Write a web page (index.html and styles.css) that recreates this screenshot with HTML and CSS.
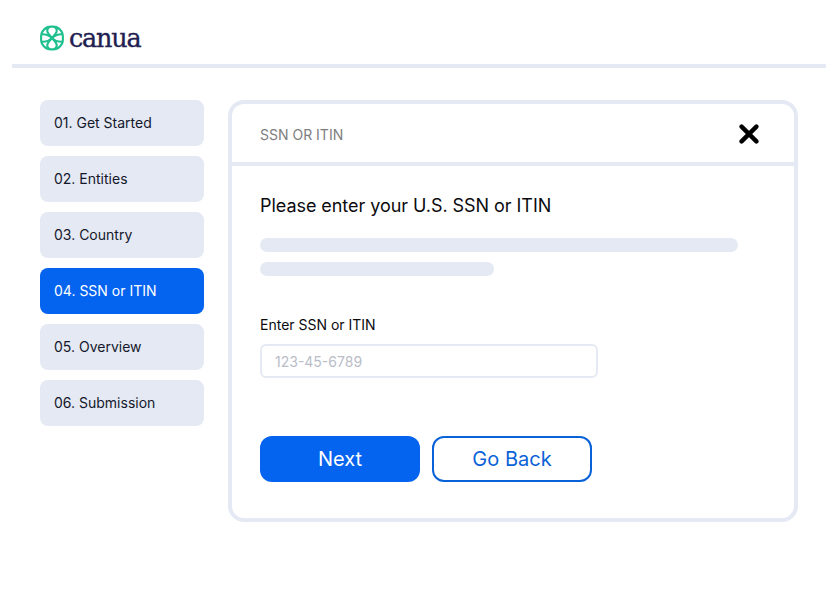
FILE: index.html
```html
<!DOCTYPE html>
<html lang="en">
<head>
<meta charset="utf-8">
<title>Canua</title>
<link rel="stylesheet" href="styles.css">
</head>
<body>
<header class="topbar">
  <svg class="logo-mark" viewBox="0 0 24 26" fill="none" stroke="#1fc08e" stroke-width="2.1" stroke-linejoin="round" stroke-linecap="round">
    <rect x="1.1" y="1.6" width="21.8" height="22.8" rx="10"/>
    <path d="M12 13 C9.6 10.4 8 8.6 7.4 6.6 C7 5 7.6 3.4 9 2.4"/>
    <path d="M12 13 C14.4 10.4 16 8.6 16.6 6.6 C17 5 16.4 3.4 15 2.4"/>
    <path d="M12 13 C9.6 15.6 8 17.4 7.4 19.4 C7 21 7.6 22.6 9 23.6"/>
    <path d="M12 13 C14.4 15.6 16 17.4 16.6 19.4 C17 21 16.4 22.6 15 23.6"/>
    <path d="M12 13 C9.6 10.6 6.6 9 2 9.2 M12 13 C9.6 15.4 6.6 17 2 16.8 M12 13 C14.4 10.6 17.4 9 22 9.2 M12 13 C14.4 15.4 17.4 17 22 16.8"/>
  </svg>
  <span class="logo-text">canua</span>
</header>
<main class="layout">
  <nav class="steps">
    <a class="step">01. Get Started</a>
    <a class="step">02. Entities</a>
    <a class="step">03. Country</a>
    <a class="step step-active">04. SSN or ITIN</a>
    <a class="step">05. Overview</a>
    <a class="step">06. Submission</a>
  </nav>
  <section class="card">
    <div class="card-head">
      <span class="card-title">SSN OR ITIN</span>
      <svg class="close" viewBox="0 0 20 20" fill="none" stroke="#000" stroke-width="4.4" stroke-linecap="round"><path d="M2.6 2.6 L17.4 17.4 M17.4 2.6 L2.6 17.4"/></svg>
    </div>
    <div class="card-body">
      <h1 class="question">Please enter your U.S. SSN or ITIN</h1>
      <div class="bar bar-long"></div>
      <div class="bar bar-short"></div>
      <label class="field-label" for="ssn">Enter SSN or ITIN</label>
      <input class="field" id="ssn" placeholder="123-45-6789">
      <div class="actions">
        <button class="btn btn-primary">Next</button>
        <button class="btn btn-outline">Go Back</button>
      </div>
    </div>
  </section>
</main>
</body>
</html>
```
FILE: styles.css
```css
* { box-sizing: border-box; }
html, body { margin: 0; background: #fff; }
body { width: 838px; height: 604px; overflow: hidden; font-family: Inter, sans-serif; }
.topbar {
  margin: 0 12px;
  height: 68px;
  padding: 12px 28px 0;
  border-bottom: 4px solid #e4e9f3;
  display: flex;
  align-items: center;
  gap: 5px;
}
.logo-mark { width: 24px; height: 26px; flex: none; }
.logo-text {
  font-family: "DejaVu Serif", serif;
  font-size: 25.5px;
  font-weight: 400;
  color: #1f2151;
  letter-spacing: -1.2px;
  line-height: 26px;
  -webkit-text-stroke: 0.35px #1f2151;
}
.layout {
  display: flex;
  align-items: flex-start;
  gap: 24px;
  padding: 32px 0 0 40px;
}
.steps { width: 164px; display: flex; flex-direction: column; gap: 10px; }
.step {
  height: 46px;
  display: flex;
  align-items: center;
  padding: 0 0 1px 14px;
  border-radius: 8px;
  background: #e4e9f3;
  color: #14182b;
  font-size: 14px;
}
.step-active { background: #0463ef; color: #fff; }
.card {
  width: 570px;
  height: 422px;
  border: 4px solid #e4e9f3;
  border-radius: 16px;
}
.card-head {
  height: 62px;
  padding: 2px 35px 0 28px;
  border-bottom: 4px solid #e4e9f3;
  display: flex;
  align-items: center;
  justify-content: space-between;
}
.card-title { font-size: 14px; color: #7e7e7e; }
.close { width: 20px; height: 20px; display: block; }
.card-body { padding: 29px 28px 0; }
.question {
  margin: 0;
  font-size: 18px;
  font-weight: 400;
  line-height: 22px;
  letter-spacing: -0.05px;
  color: #0b0b0f;
}
.bar { height: 14px; border-radius: 7px; background: #e4e9f3; }
.bar-long { width: 478px; margin-top: 21px; }
.bar-short { width: 234px; margin-top: 10px; }
.field-label {
  display: block;
  margin-top: 40px;
  font-size: 14px;
  line-height: 17px;
  color: #0b0b0f;
}
.field {
  display: block;
  width: 338px;
  height: 34px;
  margin-top: 11px;
  padding: 0 13px;
  border: 2px solid #e4e9f3;
  border-radius: 6px;
  background: #fff;
  font: 14px Inter, sans-serif;
  color: #14182b;
}
.field::placeholder { color: #b9bdc7; opacity: 1; }
.actions { display: flex; gap: 12px; margin-top: 58px; }
.btn {
  height: 46px;
  border-radius: 12px;
  font: 20px Inter, sans-serif;
  padding: 0;
}
.btn-primary { width: 160px; border: 0; background: #0463ef; color: #fff; }
.btn-outline { width: 160px; border: 2px solid #0a62d8; background: #fff; color: #0a62d8; }
```
